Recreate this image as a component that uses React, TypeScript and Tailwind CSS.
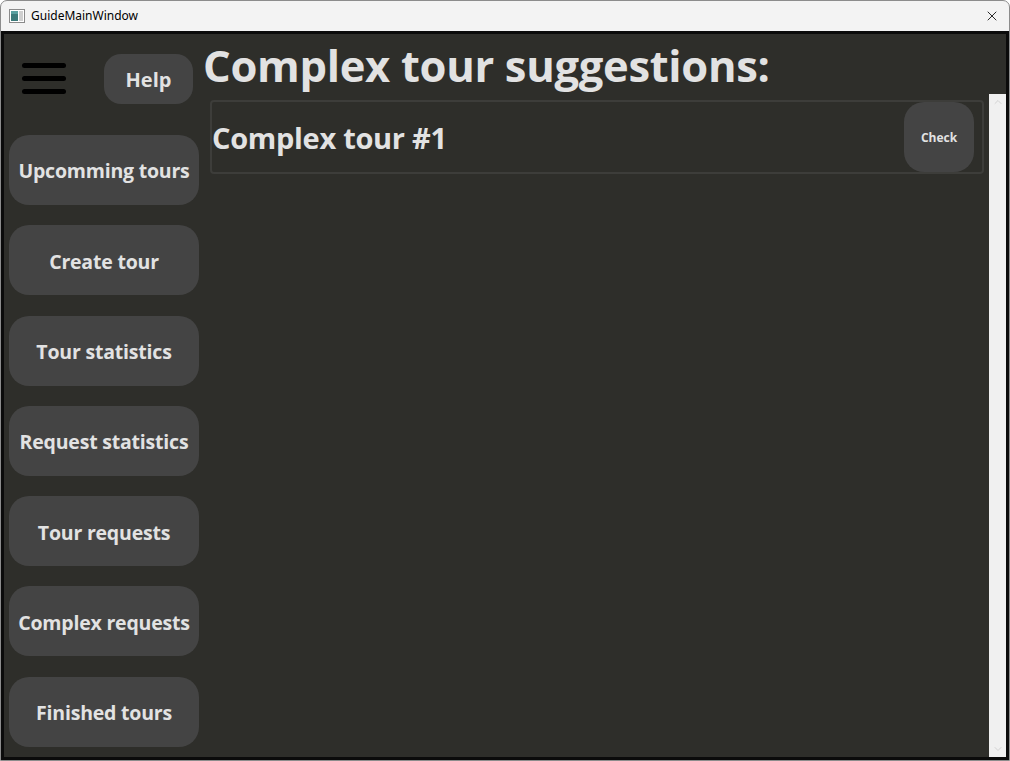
import { X, ChevronUp, ChevronDown } from "lucide-react";

const menuItems = [
  "Upcomming tours",
  "Create tour",
  "Tour statistics",
  "Request statistics",
  "Tour requests",
  "Complex requests",
  "Finished tours",
];

function WindowIcon() {
  return (
    <svg width="16" height="14" viewBox="0 0 16 14">
      <rect x="0.5" y="0.5" width="15" height="13" fill="#fff" stroke="#8a8a8a" />
      <rect x="2" y="2" width="7" height="10" fill="#3d7a7a" />
      <rect x="2" y="2" width="7" height="3" fill="#5aa0a0" />
      <rect x="10" y="2" width="4" height="10" fill="#cfcfcf" />
    </svg>
  );
}

export default function App() {
  return (
    <div
      className="w-[1010px] h-[761px] flex flex-col bg-[#f3f3f3] border border-[#8c8c8c] rounded-t-[7px] overflow-hidden"
      style={{ fontFamily: '"Open Sans", "Noto Sans", sans-serif' }}
    >
      {/* title bar */}
      <div className="h-[30px] shrink-0 flex items-center pl-[8px] pr-[8px]">
        <WindowIcon />
        <span className="ml-[6px] text-[12px] text-black" style={{ fontFamily: '"Noto Sans", sans-serif' }}>
          GuideMainWindow
        </span>
        <X className="ml-auto mr-[1px] size-[16px] text-[#1a1a1a]" strokeWidth={1.4} />
      </div>

      {/* client area */}
      <div className="flex-1 min-h-0 border-[3px] border-[#0b0b0b] bg-[#2e2e2a] flex">
        {/* sidebar */}
        <div className="w-[197px] shrink-0 pl-[5px] flex flex-col">
          <div className="flex items-start h-[101px]">
            <div className="mt-[29px] ml-[13px] flex flex-col gap-[8px]">
              <div className="w-[44px] h-[5px] rounded-full bg-black" />
              <div className="w-[44px] h-[5px] rounded-full bg-black" />
              <div className="w-[44px] h-[5px] rounded-full bg-black" />
            </div>
            <button className="ml-[38px] mt-[20px] w-[89px] h-[50px] pt-[2px] rounded-[17px] bg-[#444444] text-[#e2e2e2] text-[20px] font-bold">
              Help
            </button>
          </div>
          <div className="flex flex-col gap-[20.3px]">
            {menuItems.map((m) => (
              <button
                key={m}
                className="w-[190px] h-[70px] pt-[2px] rounded-[20px] bg-[#444444] text-[#e2e2e2] text-[19.5px] font-bold tracking-[-0.2px]"
              >
                {m}
              </button>
            ))}
          </div>
        </div>

        {/* main */}
        <div className="flex-1 min-w-0 flex flex-col">
          <div className="h-[60px] shrink-0 pl-[2px] pt-[2px] text-[43.5px] leading-[60px] font-bold text-[#e2e2e2] tracking-[-0.3px] whitespace-nowrap">
            Complex tour suggestions:
          </div>
          <div className="flex-1 min-h-0 flex">
            <div className="flex-1 pl-[9px] pr-[5px] pt-[6px]">
              <div className="h-[74px] border-2 border-[#3d3d3a] rounded-[4px] flex items-center pl-[0px] pr-[8px]">
                <span className="pt-[2px] text-[29px] font-bold text-[#e2e2e2] tracking-[-0.3px]">Complex tour #1</span>
                <button className="ml-auto w-[70px] h-[70px] pt-[2px] rounded-[20px] bg-[#444444] text-[#e2e2e2] text-[12px] font-bold">
                  Check
                </button>
              </div>
            </div>
            <div className="w-[17px] shrink-0 bg-[#f0f0f0] flex flex-col items-center justify-between py-[2px]">
              <ChevronUp className="size-[12px] text-[#c8c8c8]" strokeWidth={1.5} />
              <ChevronDown className="size-[12px] text-[#c8c8c8]" strokeWidth={1.5} />
            </div>
          </div>
        </div>
      </div>
    </div>
  );
}
